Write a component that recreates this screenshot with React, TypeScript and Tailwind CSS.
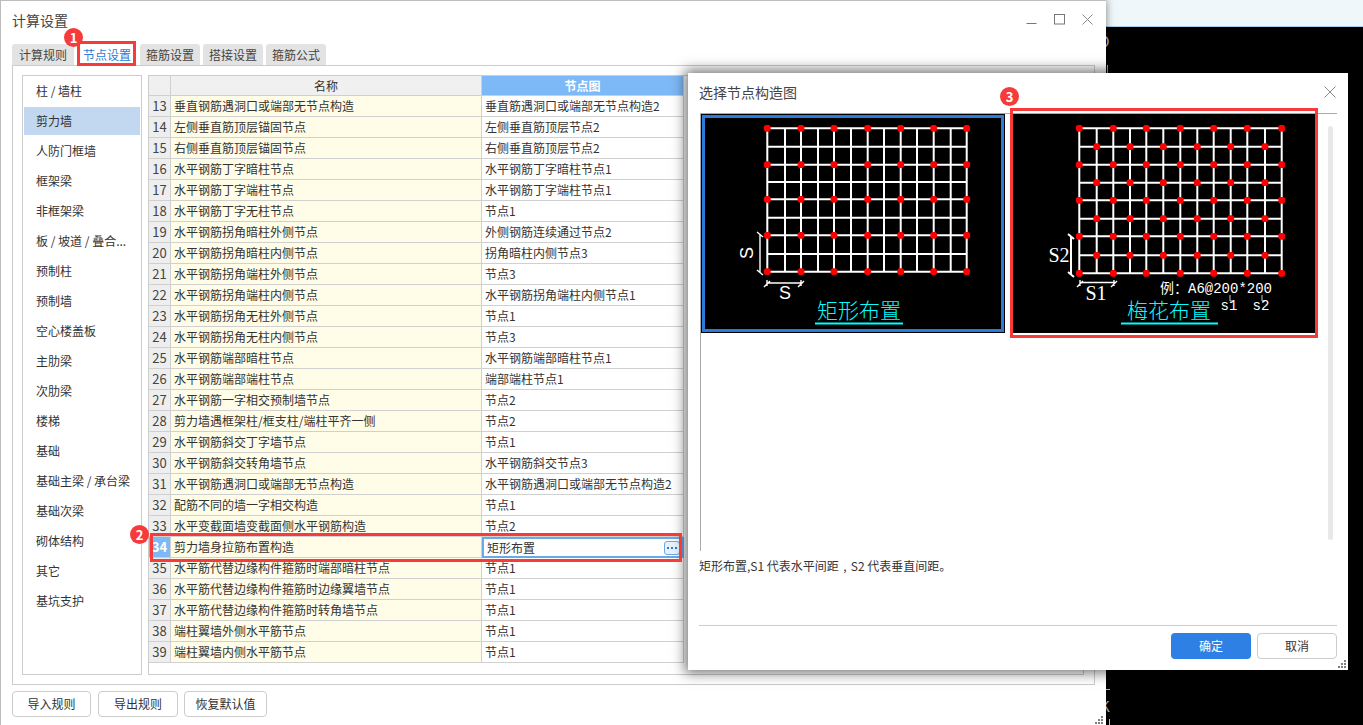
import React from "react";

const rows: [number, string, string][] = [
  [13, "垂直钢筋遇洞口或端部无节点构造", "垂直筋遇洞口或端部无节点构造2"],
  [14, "左侧垂直筋顶层锚固节点", "左侧垂直筋顶层节点2"],
  [15, "右侧垂直筋顶层锚固节点", "右侧垂直筋顶层节点2"],
  [16, "水平钢筋丁字暗柱节点", "水平钢筋丁字暗柱节点1"],
  [17, "水平钢筋丁字端柱节点", "水平钢筋丁字端柱节点1"],
  [18, "水平钢筋丁字无柱节点", "节点1"],
  [19, "水平钢筋拐角暗柱外侧节点", "外侧钢筋连续通过节点2"],
  [20, "水平钢筋拐角暗柱内侧节点", "拐角暗柱内侧节点3"],
  [21, "水平钢筋拐角端柱外侧节点", "节点3"],
  [22, "水平钢筋拐角端柱内侧节点", "水平钢筋拐角端柱内侧节点1"],
  [23, "水平钢筋拐角无柱外侧节点", "节点1"],
  [24, "水平钢筋拐角无柱内侧节点", "节点3"],
  [25, "水平钢筋端部暗柱节点", "水平钢筋端部暗柱节点1"],
  [26, "水平钢筋端部端柱节点", "端部端柱节点1"],
  [27, "水平钢筋一字相交预制墙节点", "节点2"],
  [28, "剪力墙遇框架柱/框支柱/端柱平齐一侧", "节点2"],
  [29, "水平钢筋斜交丁字墙节点", "节点1"],
  [30, "水平钢筋斜交转角墙节点", "水平钢筋斜交节点3"],
  [31, "水平钢筋遇洞口或端部无节点构造", "水平钢筋遇洞口或端部无节点构造2"],
  [32, "配筋不同的墙一字相交构造", "节点1"],
  [33, "水平变截面墙变截面侧水平钢筋构造", "节点2"],
  [34, "剪力墙身拉筋布置构造", "矩形布置"],
  [35, "水平筋代替边缘构件箍筋时端部暗柱节点", "节点1"],
  [36, "水平筋代替边缘构件箍筋时边缘翼墙节点", "节点1"],
  [37, "水平筋代替边缘构件箍筋时转角墙节点", "节点1"],
  [38, "端柱翼墙外侧水平筋节点", "节点1"],
  [39, "端柱翼墙内侧水平筋节点", "节点1"],
];

const side = ["柱 / 墙柱", "剪力墙", "人防门框墙", "框架梁", "非框架梁", "板 / 坡道 / 叠合...", "预制柱", "预制墙", "空心楼盖板", "主肋梁", "次肋梁", "楼梯", "基础", "基础主梁 / 承台梁", "基础次梁", "砌体结构", "其它", "基坑支护"];

const Dot = ({ x, y }: { x: number; y: number }) => (
  <polygon fill="#ff0000" points={`${x - 1.7},${y - 3.4} ${x + 1.7},${y - 3.4} ${x + 3.4},${y - 1.7} ${x + 3.4},${y + 1.7} ${x + 1.7},${y + 3.4} ${x - 1.7},${y + 3.4} ${x - 3.4},${y + 1.7} ${x - 3.4},${y - 1.7}`} />
);

const Grid = ({ xs, ys, stagger }: { xs: number[]; ys: number[]; stagger: boolean }) => {
  const x0 = xs[0], x1 = xs[xs.length - 1], y0 = ys[0], y1 = ys[ys.length - 1];
  const dots: React.ReactNode[] = [];
  ys.forEach((y, j) =>
    xs.forEach((x, i) => {
      const on = stagger ? (i + j) % 2 === 0 : i % 2 === 0 && j % 2 === 0;
      if (on) dots.push(<Dot key={`${i}-${j}`} x={x} y={y} />);
    })
  );
  return (
    <g>
      {xs.map((x) => <line key={x} x1={x} x2={x} y1={y0} y2={y1} stroke="#fff" strokeWidth="2" />)}
      {ys.map((y) => <line key={y} x1={x0} x2={x1} y1={y} y2={y} stroke="#fff" strokeWidth="2" />)}
      {dots}
    </g>
  );
};

const serif = "'Liberation Serif', serif";
const cad = "'Noto Sans CJK SC', sans-serif";

const RectPic = () => (
  <svg viewBox="701 114 304 219" className="block w-[304px] h-[219px]">
    <rect x="701" y="114" width="304" height="219" fill="#000" />
    <Grid xs={[767.3, 785, 801, 818, 834, 851, 867.7, 884, 900.7, 917, 933.7, 950.7, 966.7]} ys={[128.3, 146.7, 164.7, 182, 199.3, 217.7, 235.3, 254, 271.7]} stagger={false} />
    <path d="M760 234V273M757 232l6 5M757 270l6 5M767 283H801M767 280v6M801 280v6M764 287l6-6M798 287l6-6" stroke="#fff" strokeWidth="1.4" fill="none" />
    <text transform="translate(753 253) rotate(-90)" textAnchor="middle" fill="#fff" fontSize="18" fontFamily="'Liberation Sans', sans-serif">S</text>
    <text x="785" y="299" textAnchor="middle" fill="#fff" fontSize="18" fontFamily="'Liberation Sans', sans-serif">S</text>
    <text x="859" y="318" textAnchor="middle" fill="#00ffff" fontSize="21" fontWeight="300" fontFamily={cad}>矩形布置</text>
    <rect x="815" y="322.5" width="88" height="2" fill="#00ffff" />
  </svg>
);

const PlumPic = () => (
  <svg viewBox="1013 114 302 219" className="block w-[302px] h-[219px]">
    <rect x="1013" y="114" width="302" height="219" fill="#000" />
    <Grid xs={[1079.3, 1096.7, 1113.3, 1130, 1146.3, 1163.3, 1180.3, 1197.3, 1213.7, 1230.7, 1247.3, 1265, 1281.7]} ys={[128.3, 146.7, 164.7, 182.7, 200.3, 218.7, 236.3, 255.3, 273.3]} stagger />
    <path d="M1071 236V274M1068 234l6 5M1068 272l6 5" stroke="#fff" strokeWidth="2" fill="none" />
    <path d="M1080 282.5H1114M1080 280v6M1114 280v6M1077 287l6-6M1111 287l6-6" stroke="#fff" strokeWidth="1.4" fill="none" />
    <text x="1059" y="262" textAnchor="middle" fill="#fff" fontSize="20" fontFamily={serif}>S2</text>
    <text x="1096" y="300" textAnchor="middle" fill="#fff" fontSize="20" fontFamily={serif}>S1</text>
    <text x="1160" y="293" fill="#fff" fontSize="14" fontFamily="'Liberation Mono', 'Noto Sans CJK SC', monospace" textLength="112">例：A6@200*200</text>
    <path d="M1230 295v6h3M1262 295v6h3" stroke="#fff" strokeWidth="0.8" fill="none" />
    <text x="1229" y="310" textAnchor="middle" fill="#fff" fontSize="14" fontFamily="'Liberation Mono', monospace">s1</text>
    <text x="1261" y="310" textAnchor="middle" fill="#fff" fontSize="14" fontFamily="'Liberation Mono', monospace">s2</text>
    <text x="1169" y="318" textAnchor="middle" fill="#00ffff" fontSize="21" fontWeight="300" fontFamily={cad}>梅花布置</text>
    <rect x="1121" y="322.5" width="97" height="2" fill="#00ffff" />
  </svg>
);

const Grip = () => (
  <svg width="9" height="9" viewBox="0 0 9 9" fill="#808080">
    <rect x="6" y="0" width="2" height="2" /><rect x="3" y="3" width="2" height="2" /><rect x="6" y="3" width="2" height="2" />
    <rect x="0" y="6" width="2" height="2" /><rect x="3" y="6" width="2" height="2" /><rect x="6" y="6" width="2" height="2" />
  </svg>
);

const Badge = ({ n, cls }: { n: number; cls: string }) => (
  <div className={`absolute z-40 flex items-center justify-center w-[19px] h-[19px] rounded-full bg-[#f73b3b] text-white text-[13px] font-bold leading-none ${cls}`}>{n}</div>
);

const Tab = ({ label, cls, active }: { label: string; cls: string; active?: boolean }) => (
  <div className={`h-[21px] flex items-center justify-center rounded-t-[3px] text-[12px] ${active ? "bg-white text-[#2b7bd8]" : "bg-[#e3e3e3] text-[#444]"} ${cls}`}>{label}</div>
);

const FootBtn = ({ label, cls }: { label: string; cls: string }) => (
  <div className={`h-[26px] flex items-center justify-center border border-[#ccc] rounded-[4px] bg-white text-[12px] text-[#333] ${cls}`}>{label}</div>
);

export default function App() {
  return (
    <div className="relative w-[1363px] h-[725px] overflow-hidden bg-black flex font-['Noto_Sans_CJK_SC','Noto_Sans',sans-serif] text-[#333]">
      {/* main window */}
      <div className="relative z-10 w-[1106px] h-[725px] flex flex-col shrink-0 bg-white border-t border-l border-[#bdbdbd] shadow-[0_0_8px_rgba(0,0,0,0.5)]">
        <div className="h-[43px] flex justify-between pl-[11px] pr-[13px] shrink-0">
          <div className="text-[14px] leading-[20px] mt-[9px] text-[#444]">计算设置</div>
          <div className="flex gap-[17px] pt-[13px] h-[30px]">
            <svg width="11" height="11" viewBox="0 0 11 11" stroke="#777" fill="none"><path d="M0.5 9.5H10.5" /></svg>
            <svg width="11" height="11" viewBox="0 0 11 11" stroke="#777" fill="none"><rect x="0.5" y="0.5" width="10" height="9.5" /></svg>
            <svg width="11" height="11" viewBox="0 0 11 11" stroke="#888" fill="none"><path d="M0.5 0.5L10.5 10.5M10.5 0.5L0.5 10.5" /></svg>
          </div>
        </div>
        <div className="flex pl-[11px] shrink-0">
          <Tab label="计算规则" cls="w-[62px] mr-[4px]" />
          <Tab label="节点设置" cls="w-[58px] mr-[4px]" active />
          <Tab label="箍筋设置" cls="w-[60px] mr-[3px]" />
          <Tab label="搭接设置" cls="w-[60px] mr-[3px]" />
          <Tab label="箍筋公式" cls="w-[60px]" />
        </div>
        <div className="ml-[11px] w-[1083px] h-[620px] shrink-0 border border-[#ccc] flex pl-[9px] pr-[10px] pt-[9px] pb-[9px] gap-[6px]">
          <div className="w-[120px] border border-[#ccc] p-px flex flex-col gap-[2px]">
            {side.map((s, i) => (
              <div key={s} className={`h-[28px] shrink-0 flex items-center pl-[12px] text-[12px] whitespace-nowrap ${i === 1 ? "bg-[#c1d8f0]" : ""}`}>{s}</div>
            ))}
          </div>
          <div className="flex-1 border border-[#ccc] flex flex-col">
            <div className="flex h-[20px] shrink-0 text-[12px]">
              <div className="w-[22px] bg-[#f0f0f0] border-r border-b border-[#d0d0d0]" />
              <div className="w-[311px] bg-[#f0f0f0] border-r border-b border-[#d0d0d0] flex items-center justify-center">名称</div>
              <div className="w-[202px] bg-[#7db9f6] border-r border-b border-[#d0d0d0] flex items-center justify-center font-bold text-white">节点图</div>
            </div>
            {rows.map(([n, a, b]) => {
              const sel = n === 34;
              return (
                <div key={n} className="flex h-[21px] shrink-0 text-[12px]">
                  <div className={`w-[22px] border-r border-b border-[#d0d0d0] flex items-center justify-center text-[13px] ${sel ? "bg-[#7db9f6] text-white font-bold" : "bg-[#eeeeee] text-[#444]"}`}>{n}</div>
                  <div className="w-[311px] bg-[#fffde8] border-r border-b border-[#d0d0d0] flex items-center whitespace-nowrap pl-[3px]">{a}</div>
                  {sel ? (
                    <div className="w-[202px] border-2 border-[#6aa9e8] flex items-center justify-between pl-[3px] pr-[2px] bg-white">
                      <span>{b}</span>
                      <span className="w-[16px] h-[14px] rounded-[3px] border border-[#6aa9e8] bg-[#eaf3fd] flex items-center justify-center gap-[2px]">
                        <i className="w-[2px] h-[2px] bg-[#2b7bd8]" /><i className="w-[2px] h-[2px] bg-[#2b7bd8]" /><i className="w-[2px] h-[2px] bg-[#2b7bd8]" />
                      </span>
                    </div>
                  ) : (
                    <div className="w-[202px] border-r border-b border-[#d0d0d0] flex items-center pl-[3px] whitespace-nowrap">{b}</div>
                  )}
                </div>
              );
            })}
          </div>
        </div>
        <div className="flex pl-[11px] pt-[6px] shrink-0">
          <FootBtn label="导入规则" cls="w-[79px] mr-[7px]" />
          <FootBtn label="导出规则" cls="w-[80px] mr-[6px]" />
          <FootBtn label="恢复默认值" cls="w-[83px]" />
        </div>
        <div className="absolute right-[2px] bottom-0"><Grip /></div>
      </div>

      {/* right background */}
      <div className="flex-1">
        <div className="h-[27px] bg-[#f0f7fb] border-b border-[#a9cfee]" />
      </div>
      <span className="absolute left-[1099px] top-[31px] text-[14px] text-[#ccc] leading-[20px]">O</span>
      <span className="absolute left-[1107px] top-[65px] w-px h-[8px] bg-[#ccc]" />
      <span className="absolute left-[1106px] top-[689px] w-[4px] h-px bg-[#ccc]" />
      <span className="absolute left-[1100px] top-[696px] text-[15px] text-[#ccc] leading-[20px]">K</span>
      <span className="absolute left-[1109px] top-[719px] w-px h-[6px] bg-[#ccc]" />

      {/* dialog */}
      <div className="absolute z-20 left-[688px] top-[73px] w-[660px] h-[597px] bg-white flex flex-col shadow-[0_0_12px_3px_rgba(0,0,0,0.55)]">
        <div className="h-[40px] shrink-0 pl-[11px] pr-[12px] pb-[2px] flex items-center justify-between">
          <span className="text-[14px] text-[#444]">选择节点构造图</span>
          <svg width="12" height="12" viewBox="0 0 12 12" stroke="#888" fill="none"><path d="M0.5 0.5L11.5 11.5M11.5 0.5L0.5 11.5" /></svg>
        </div>
        <div className="ml-[12px] w-[637px] h-[438px] shrink-0 border-t border-l border-[#aaa] flex">
          <div className="w-[304px] h-[219px] relative shrink-0">
            <RectPic />
            <div className="absolute inset-px border-[3px] border-[#2b7bd8]" />
          </div>
          <div className="ml-[8px] w-[302px] h-[219px] shrink-0"><PlumPic /></div>
          <div className="ml-[13px] mt-[12px] w-[5px] h-[414px] rounded-full bg-[#e8e8e8]" />
        </div>
        <div className="pl-[11px] mt-[6px] text-[12px] leading-[18px] text-[#333]">矩形布置,S1 代表水平间距<span className="inline-block w-[12px] text-center">,</span>S2 代表垂直间距。</div>
        <div className="mt-auto ml-[11px] mr-[11px] border-t border-[#ccc] pt-[7px] pb-[11px] flex justify-end gap-[6px]">
          <div className="w-[80px] h-[26px] rounded-[4px] bg-[#2f80e4] text-white text-[12px] flex items-center justify-center">确定</div>
          <div className="w-[80px] h-[26px] rounded-[4px] border border-[#ccc] text-[12px] flex items-center justify-center">取消</div>
        </div>
        <div className="absolute right-px bottom-px"><Grip /></div>
      </div>

      {/* annotations */}
      <div className="absolute z-30 left-[77px] top-[41px] w-[59px] h-[25px] border-[3px] border-[#f73b3b]" />
      <Badge n={1} cls="left-[64px] top-[28px]" />
      <div className="absolute z-30 left-[150px] top-[533px] w-[532px] h-[29px] border-[3px] border-[#f73b3b]" />
      <Badge n={2} cls="left-[130px] top-[525px]" />
      <div className="absolute z-30 left-[1010px] top-[108px] w-[308px] h-[230px] border-[3px] border-[#f73b3b]" />
      <Badge n={3} cls="left-[1000px] top-[87px]" />
    </div>
  );
}
